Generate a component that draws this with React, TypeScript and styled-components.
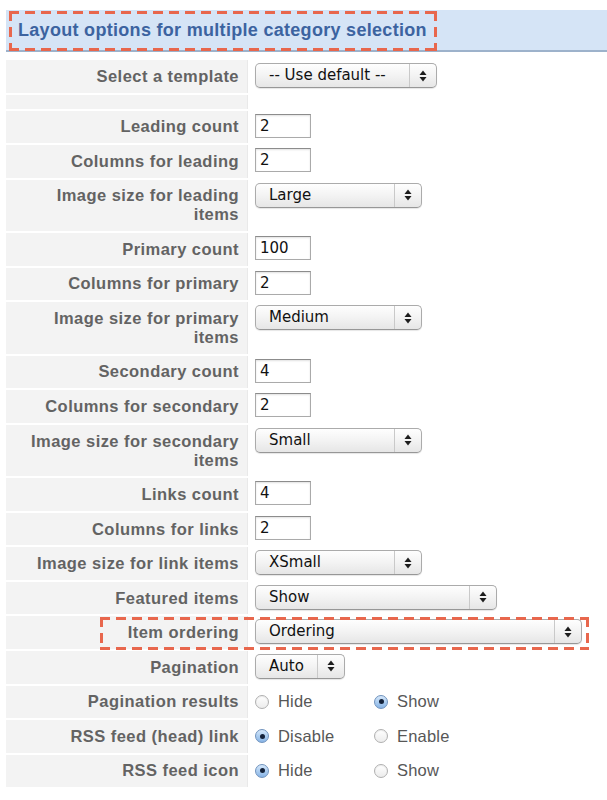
import React from "react";
import styled, { createGlobalStyle } from "styled-components";

const Global = createGlobalStyle`
  html, body { margin: 0; padding: 0; background: #fff; }
  body { font-family: "Liberation Sans", Arial, sans-serif; }
`;

const DASH = "#e8674d";

const Page = styled.div`
  padding: 10px 0 0 6px;
  width: 601px;
`;

const HeaderBar = styled.div`
  display: flex;
  align-items: center;
  height: 40px;
  background: #d5e4f6;
  border-bottom: 2px solid #9db2cb;
`;

const Title = styled.h2`
  position: relative;
  margin: 0 0 0 3px;
  padding: 0 10px 0 9px;
  height: 40px;
  line-height: 41px;
  font-family: "Liberation Sans", Arial, sans-serif;
  font-weight: bold;
  font-size: 18px;
  letter-spacing: 0.3px;
  color: #3c63a0;
  white-space: nowrap;
`;

const DashedFrame = styled.span`
  position: absolute;
  left: 0;
  right: 0;
  top: 1px;
  bottom: -1px;
  pointer-events: none;
  background:
    repeating-linear-gradient(90deg, ${DASH} 0 10px, transparent 10px 16px) top left / 100% 3px no-repeat,
    repeating-linear-gradient(90deg, ${DASH} 0 10px, transparent 10px 16px) bottom left / 100% 3px no-repeat,
    repeating-linear-gradient(180deg, ${DASH} 0 10px, transparent 10px 16px) top left / 3px 100% no-repeat,
    repeating-linear-gradient(180deg, ${DASH} 0 10px, transparent 10px 16px) top right / 3px 100% no-repeat;
`;

const Form = styled.div`
  display: flex;
  flex-direction: column;
  gap: 2px;
  margin-top: 8px;
`;

const Row = styled.div`
  position: relative;
  display: grid;
  grid-template-columns: 242px 1fr;
`;

const Label = styled.div<{ $spacer?: boolean }>`
  background: #f3f3f3;
  border-right: 1px solid #e9e9e9;
  box-sizing: border-box;
  padding: ${(p) => (p.$spacer ? "0" : "6.78px 8px 6.78px 16px")};
  height: ${(p) => (p.$spacer ? "14px" : "auto")};
  text-align: right;
  font-weight: bold;
  font-size: 16.5px;
  letter-spacing: 0.45px;
  line-height: 19px;
  color: #636363;
  white-space: pre-line;
`;

const Value = styled.div<{ $center?: boolean }>`
  display: flex;
  align-items: ${(p) => (p.$center ? "center" : "flex-start")};
  padding: ${(p) => (p.$center ? "0 0 0 7px" : "3px 0 0 7px")};
`;

const TextInput = styled.input`
  box-sizing: border-box;
  width: 56px;
  height: 24px;
  margin: 0;
  padding: 0 4px;
  border: 1px solid #aaaaaa;
  border-top-color: #8c8c8c;
  box-shadow: inset 0 1px 2px rgba(0, 0, 0, 0.12);
  font-family: "DejaVu Sans", sans-serif;
  font-size: 15px;
  color: #111;
  background: #fff;
  outline: none;
`;

const SelectBox = styled.div<{ $w: number }>`
  box-sizing: border-box;
  display: flex;
  align-items: stretch;
  width: ${(p) => p.$w}px;
  height: 25px;
  border: 1px solid #ababab;
  border-bottom-color: #979797;
  border-radius: 5px;
  background: linear-gradient(#fefefe, #f3f3f3 50%, #e6e6e6);
  box-shadow: 0 1px 1px rgba(0, 0, 0, 0.1);
  font-family: "DejaVu Sans", sans-serif;
  font-size: 15px;
  color: #111;
`;

const SelectText = styled.span`
  flex: 1;
  padding-left: 13px;
  line-height: 23px;
  white-space: nowrap;
`;

const Stepper = styled.span`
  width: 26px;
  border-left: 1px solid #c9c9c9;
  display: flex;
  align-items: center;
  justify-content: center;
`;

const RadioGroup = styled.div`
  display: grid;
  grid-template-columns: 119px auto;
`;

const Option = styled.label`
  display: inline-flex;
  align-items: center;
  gap: 9px;
  font-size: 16.5px;
  letter-spacing: 0.2px;
  color: #575757;
`;

const RadioDot = styled.span<{ $on?: boolean }>`
  box-sizing: border-box;
  width: 14px;
  height: 14px;
  border-radius: 50%;
  display: inline-flex;
  align-items: center;
  justify-content: center;
  border: 1px solid ${(p) => (p.$on ? "#6f92bd" : "#b0b0b0")};
  background: ${(p) =>
    p.$on
      ? "linear-gradient(#d6e8fb, #a9cbef 55%, #88b4e6)"
      : "linear-gradient(#ffffff, #ececec)"};
  box-shadow: ${(p) => (p.$on ? "none" : "inset 0 1px 1px rgba(0,0,0,0.08)")};
  &::after {
    content: "";
    display: ${(p) => (p.$on ? "block" : "none")};
    width: 5px;
    height: 5px;
    border-radius: 50%;
    background: #14223a;
  }
`;

const OrderingMark = styled.span`
  position: absolute;
  left: 94px;
  top: 0.5px;
  width: 489px;
  height: 33px;
  pointer-events: none;
  background:
    repeating-linear-gradient(90deg, ${DASH} 0 10px, transparent 10px 16px) top left / 100% 3px no-repeat,
    repeating-linear-gradient(90deg, ${DASH} 0 10px, transparent 10px 16px) bottom left / 100% 3px no-repeat,
    repeating-linear-gradient(180deg, ${DASH} 0 10px, transparent 10px 16px) top left / 3px 100% no-repeat,
    repeating-linear-gradient(180deg, ${DASH} 0 10px, transparent 10px 16px) top right / 3px 100% no-repeat;
`;

const Arrows = () => (
  <svg width="8" height="12" viewBox="0 0 8 12" aria-hidden="true">
    <path d="M4 0.5 L7.5 5 L0.5 5 Z" fill="#1d1d1d" />
    <path d="M4 11.5 L7.5 7 L0.5 7 Z" fill="#1d1d1d" />
  </svg>
);

const Select = ({ value, width }: { value: string; width: number }) => (
  <SelectBox $w={width}>
    <SelectText>{value}</SelectText>
    <Stepper>
      <Arrows />
    </Stepper>
  </SelectBox>
);

type Field =
  | { kind: "select"; label: string; value: string; width: number; mark?: boolean }
  | { kind: "text"; label: string; value: string }
  | { kind: "radio"; label: string; options: [string, string]; checked: number }
  | { kind: "spacer" };

const fields: Field[] = [
  { kind: "select", label: "Select a template", value: "-- Use default --", width: 182 },
  { kind: "spacer" },
  { kind: "text", label: "Leading count", value: "2" },
  { kind: "text", label: "Columns for leading", value: "2" },
  { kind: "select", label: "Image size for leading\nitems", value: "Large", width: 167 },
  { kind: "text", label: "Primary count", value: "100" },
  { kind: "text", label: "Columns for primary", value: "2" },
  { kind: "select", label: "Image size for primary\nitems", value: "Medium", width: 167 },
  { kind: "text", label: "Secondary count", value: "4" },
  { kind: "text", label: "Columns for secondary", value: "2" },
  { kind: "select", label: "Image size for secondary\nitems", value: "Small", width: 167 },
  { kind: "text", label: "Links count", value: "4" },
  { kind: "text", label: "Columns for links", value: "2" },
  { kind: "select", label: "Image size for link items", value: "XSmall", width: 167 },
  { kind: "select", label: "Featured items", value: "Show", width: 242 },
  { kind: "select", label: "Item ordering", value: "Ordering", width: 327, mark: true },
  { kind: "select", label: "Pagination", value: "Auto", width: 90 },
  { kind: "radio", label: "Pagination results", options: ["Hide", "Show"], checked: 1 },
  { kind: "radio", label: "RSS feed (head) link", options: ["Disable", "Enable"], checked: 0 },
  { kind: "radio", label: "RSS feed icon", options: ["Hide", "Show"], checked: 0 },
];

export default function App() {
  return (
    <Page>
      <Global />
      <HeaderBar>
        <Title>
          Layout options for multiple category selection
          <DashedFrame />
        </Title>
      </HeaderBar>
      <Form>
        {fields.map((f, i) => {
          if (f.kind === "spacer") {
            return (
              <Row key={i}>
                <Label $spacer />
                <Value />
              </Row>
            );
          }
          return (
            <Row key={i}>
              <Label>{f.label}</Label>
              {f.kind === "text" && (
                <Value>
                  <TextInput readOnly value={f.value} />
                </Value>
              )}
              {f.kind === "select" && (
                <Value>
                  <Select value={f.value} width={f.width} />
                </Value>
              )}
              {f.kind === "radio" && (
                <Value $center>
                  <RadioGroup>
                    {f.options.map((o, j) => (
                      <Option key={o}>
                        <RadioDot $on={j === f.checked} />
                        {o}
                      </Option>
                    ))}
                  </RadioGroup>
                </Value>
              )}
              {f.kind === "select" && f.mark && <OrderingMark />}
            </Row>
          );
        })}
      </Form>
    </Page>
  );
}
